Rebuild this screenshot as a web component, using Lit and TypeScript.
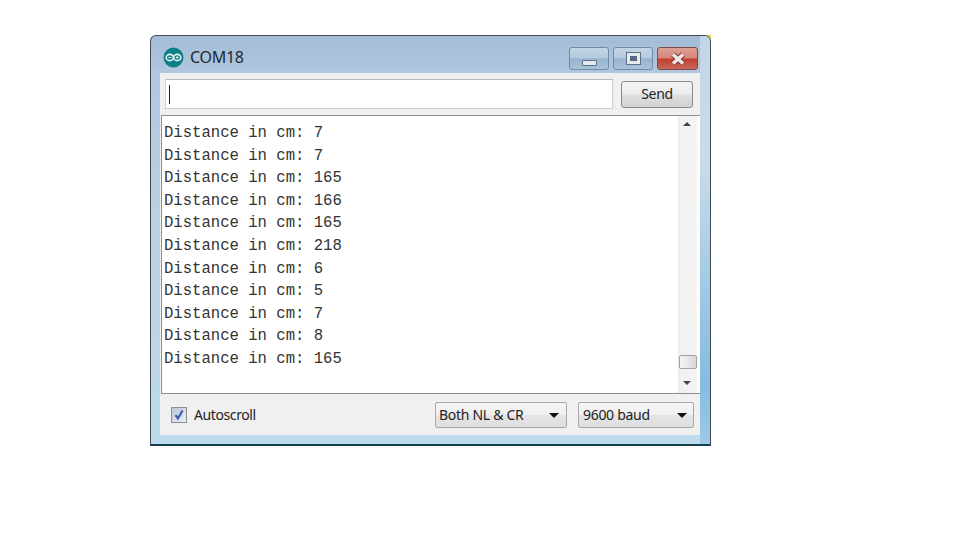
import { LitElement, html, css, svg } from "lit";
import { customElement } from "lit/decorators.js";

const LINES = [7, 7, 165, 166, 165, 218, 6, 5, 7, 8, 165];

@customElement("app-root")
export class AppRoot extends LitElement {
  static styles = css`
    :host { display: block; width: 960px; height: 540px; background: #fff; overflow: hidden; font-family: "Noto Sans", sans-serif; }
    .page { padding: 35px 0 0 150px; }
    .window {
      position: relative;
      width: 561px; height: 411px; box-sizing: border-box;
      border: 1px solid #3f4b55; border-bottom: 2px solid #17404f; border-radius: 6px 6px 0 0;
      background:
        linear-gradient(180deg, #c4d6e6 0%, #c9dcea 30%, #a9cde6 55%, #86bbe0 85%, #9cc9e6 100%) right top / 10px 100% no-repeat,
        linear-gradient(180deg, #a3bcd6 0%, #b0c7de 9%, #b9cfe3 40%, #bdd6e8 80%, #bcdcee 100%);
      display: flex; flex-direction: column; padding: 0 10px 9px 9px;
    }
    .corner { position: absolute; top: -1px; right: -1px; width: 4px; height: 4px; background: #e9cf45; clip-path: polygon(0 0, 100% 0, 100% 100%); }
    .title { height: 37px; display: flex; align-items: center; gap: 4px; flex: none; }
    .title-text { font-size: 16px; color: #1c2a36; letter-spacing: -0.3px; flex: 1; padding: 1px 0 0 2px; margin-top: 3px; }
    .logo { width: 21px; height: 21px; margin: 5px 0 0 3px; flex: none; }
    .ctrls { display: flex; gap: 4px; margin: 0 2px 0 0; align-self: flex-start; padding-top: 11px; }
    .ctrl { width: 40px; height: 23px; box-sizing: border-box; border: 1px solid #6d8aa6; border-radius: 3px; display: flex; align-items: center; justify-content: center;
      background: linear-gradient(180deg, #c3d5e6 0%, #b5cbe0 45%, #97b3cd 52%, #a9c3da 100%); }
    .ctrl.close { width: 41px; border-color: #7d4a48; background: linear-gradient(180deg, #dda096 0%, #d8877a 45%, #c0402f 55%, #c96a5c 100%); }
    .min-g { width: 15px; height: 6px; margin-top: 8px; background: #e6e9ec; border: 1px solid #5d7186; border-radius: 1px; box-sizing: border-box; }
    .max-g { width: 13px; height: 11px; box-sizing: border-box; border: 3px solid #e6e9ec; outline: 1px solid #5d7186; background: #54697f; }
    .panel { flex: 1; background: #f0f0f0; display: flex; flex-direction: column; min-height: 0; }
    .input-row { height: 42px; flex: none; display: flex; align-items: center; padding: 0 7px 0 5px; gap: 8px; box-sizing: border-box; }
    .input { flex: 1; height: 30px; box-sizing: border-box; background: #fff; border: 1px solid #cfcfcf; border-top-color: #b8b8b8; display: flex; align-items: center; padding-left: 3px; }
    .caret { width: 1px; height: 19px; background: #222; }
    .send { width: 72px; height: 27px; box-sizing: border-box; border: 1px solid #8a8a8a; border-radius: 3px; background: linear-gradient(180deg, #f4f4f4 0%, #ececec 48%, #dedede 52%, #d2d2d2 100%);
      font-size: 14px; color: #222; display: flex; align-items: center; justify-content: center; letter-spacing: -0.3px; padding-bottom: 2px; }
    .output { flex: none; height: 279px; box-sizing: border-box; margin-left: 1px; border: 1px solid #8d8d8d; border-right: none; background: #fff; display: flex; }
    .log { flex: 1; padding: 6px 0 0 2px; font-family: "Liberation Mono", monospace; font-size: 15.6px; line-height: 22.6px; color: #333; }
    .line { white-space: pre; }
    .scroll { width: 22px; flex: none; background: linear-gradient(90deg, #f1f1f1 0%, #f3f3f3 85%, #fff 86%); border-left: 1px solid #e8e8e8; display: flex; flex-direction: column; position: relative; justify-content: flex-end; box-sizing: border-box; }
    .up { position: absolute; top: 6px; left: 4px; width: 0; height: 0; border: 4px solid transparent; border-bottom: 4px solid #444; border-top: 0; }
    .thumb { width: 18px; height: 14px; box-sizing: border-box; margin-bottom: 24px; border: 1px solid #a2a2a2; border-radius: 2px; background: linear-gradient(90deg, #f6f6f6, #d8d8d8); }
    .down { position: absolute; bottom: 8px; left: 4px; width: 0; height: 0; border: 4px solid transparent; border-top: 4px solid #444; border-bottom: 0; }
    .bottom { flex: 1; display: flex; align-items: center; padding: 0 6px 0 11px; box-sizing: border-box; font-size: 14px; color: #222; letter-spacing: -0.4px; }
    .check { width: 16px; height: 16px; box-sizing: border-box; border: 1px solid #8e8f8f; background: linear-gradient(135deg, #b9c4d6, #eef1f6); display: flex; align-items: center; justify-content: center; flex: none; margin-top: 1px; }
    .check svg { width: 12px; height: 12px; }
    .label { margin-left: 7px; flex: 1; }
    .combo { height: 26px; box-sizing: border-box; border: 1px solid #a8a8a8; border-radius: 2px; background: linear-gradient(180deg, #f6f6f6 0%, #efefef 48%, #e4e4e4 52%, #dedede 100%); display: flex; align-items: center; padding: 0 7px 0 3px; justify-content: space-between; letter-spacing: -0.3px; }
    .c1 { width: 132px; margin-right: 11px; }
    .c2 { width: 116px; padding: 0 6px 0 4px; }
    .arrow { width: 0; height: 0; border: 5px solid transparent; border-top: 5px solid #111; border-bottom: 0; margin-top: 2px; }
  `;

  render() {
    return html`<div class="page">
      <div class="window">
        <div class="corner"></div>
        <div class="title">
          <svg class="logo" viewBox="0 0 21 21">
            <circle cx="10.5" cy="10.5" r="10" fill="#0e7f87"></circle>
            ${svg`<ellipse cx="6.8" cy="10.5" rx="3.6" ry="3.1" fill="none" stroke="#e6f4f4" stroke-width="1.6"></ellipse>
            <ellipse cx="14.2" cy="10.5" rx="3.6" ry="3.1" fill="none" stroke="#e6f4f4" stroke-width="1.6"></ellipse>
            <path d="M5.4 10.5h2.8M12.8 10.5h2.8M14.2 9.1v2.8" stroke="#e6f4f4" stroke-width="1"></path>`}
          </svg>
          <div class="title-text">COM18</div>
          <div class="ctrls">
            <div class="ctrl"><div class="min-g"></div></div>
            <div class="ctrl"><div class="max-g"></div></div>
            <div class="ctrl close">
              <svg width="20" height="14" viewBox="0 0 20 14"><path d="M5 2.5l10 9M15 2.5L5 11.5" stroke="#7a3a34" stroke-width="5.4"></path><path d="M5 2.5l10 9M15 2.5L5 11.5" stroke="#efe8e4" stroke-width="3.6"></path></svg>
            </div>
          </div>
        </div>
        <div class="panel">
          <div class="input-row">
            <div class="input"><div class="caret"></div></div>
            <div class="send">Send</div>
          </div>
          <div class="output">
            <div class="log">${LINES.map((n) => html`<div class="line">Distance in cm: ${n}</div>`)}</div>
            <div class="scroll"><div class="up"></div><div class="thumb"></div><div class="down"></div></div>
          </div>
          <div class="bottom">
            <div class="check">
              <svg viewBox="0 0 12 12"><path d="M2.5 6l2.5 3.5L9.5 1.5" fill="none" stroke="#3f5fa8" stroke-width="2.2"></path></svg>
            </div>
            <div class="label">Autoscroll</div>
            <div class="combo c1"><span>Both NL &amp; CR</span><div class="arrow"></div></div>
            <div class="combo c2"><span>9600 baud</span><div class="arrow"></div></div>
          </div>
        </div>
      </div>
    </div>`;
  }
}
